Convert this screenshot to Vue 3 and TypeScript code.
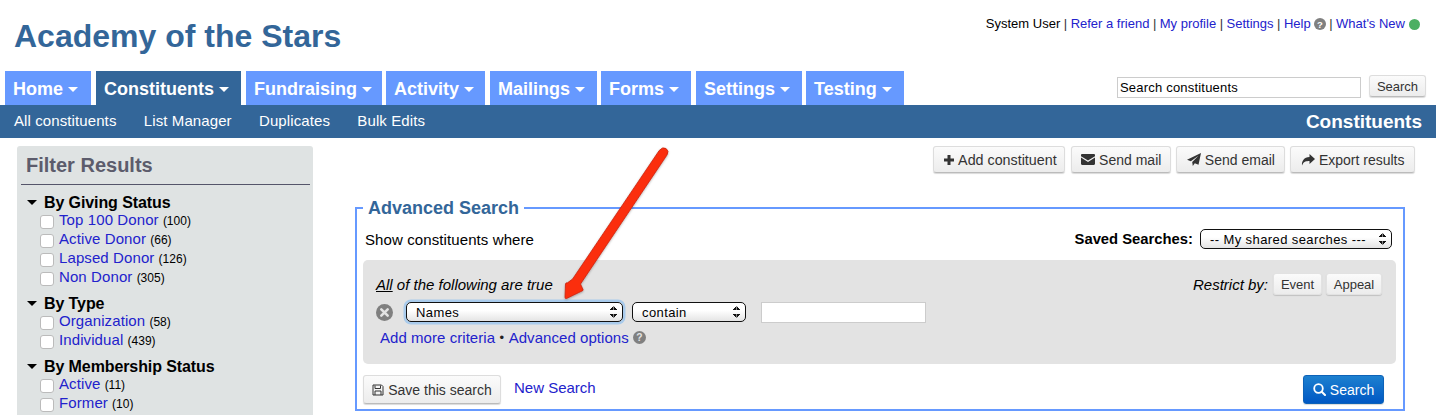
<script setup lang="ts">
const tabs = [
  { label: 'Home', w: 86, mr: 5 },
  { label: 'Constituents', w: 145, mr: 5, active: true },
  { label: 'Fundraising', w: 136, mr: 4 },
  { label: 'Activity', w: 99, mr: 5 },
  { label: 'Mailings', w: 107, mr: 4 },
  { label: 'Forms', w: 90, mr: 5 },
  { label: 'Settings', w: 106, mr: 4 },
  { label: 'Testing', w: 98, mr: 0 },
]
const subs = ['All constituents', 'List Manager', 'Duplicates', 'Bulk Edits']
const groups = [
  { title: 'By Giving Status', items: [['Top 100 Donor', '100'], ['Active Donor', '66'], ['Lapsed Donor', '126'], ['Non Donor', '305']] },
  { title: 'By Type', items: [['Organization', '58'], ['Individual', '439']] },
  { title: 'By Membership Status', items: [['Active', '11'], ['Former', '10']] },
]
</script>

<template>
  <div class="page">
    <header class="top">
      <h1 class="brand">Academy of the Stars</h1>
      <div class="userbar">
        <span>System User</span><i>|</i><a>Refer a friend</a><i>|</i><a>My profile</a><i>|</i><a>Settings</a><i>|</i><a>Help</a>
        <svg class="q" viewBox="0 0 12 12"><circle cx="6" cy="6" r="6" fill="#808080"/><text x="6" y="9.500" text-anchor="middle" font-size="9.500" font-weight="700" fill="#fff" font-family="Liberation Sans">?</text></svg>
        <i>|</i><a>What's New</a>
        <span class="dot"></span>
      </div>
    </header>

    <div class="navrow">
      <nav class="tabs">
        <a v-for="t in tabs" :key="t.label" class="tab" :class="{ active: t.active }" :style="{ width: t.w + 'px', marginRight: t.mr + 'px' }">
          {{ t.label }}<span class="caret"></span>
        </a>
      </nav>
      <form class="topsearch" @submit.prevent>
        <input class="topinput" value="Search constituents" />
        <button class="btn small">Search</button>
      </form>
    </div>

    <div class="subnav">
      <a v-for="s in subs" :key="s">{{ s }}</a>
      <strong>Constituents</strong>
    </div>

    <div class="content">
      <aside class="filters">
        <h2>Filter Results</h2>
        <div v-for="g in groups" :key="g.title" class="group">
          <h3><span class="gcaret"></span>{{ g.title }}</h3>
          <label v-for="it in g.items" :key="it[0]" class="item">
            <span class="check"></span><a>{{ it[0] }}</a> <small>({{ it[1] }})</small>
          </label>
        </div>
      </aside>

      <main class="main">
        <div class="actions">
          <button class="btn add">
            <svg viewBox="0 0 12 12" class="ic" style="width:12px"><path d="M4.500 1h3v3.500H11v3H7.500V11h-3V7.500H1v-3h3.500z" fill="#333"/></svg>Add constituent
          </button>
          <button class="btn mail">
            <svg viewBox="0 0 14 11" class="ic" style="width:14px"><path d="M0 2.200V1.200C0 .5.5 0 1.200 0h11.600c.7 0 1.200.5 1.200 1.200v1L7 6.500zM0 3.600l7 4.300 7-4.300v6.200c0 .7-.5 1.200-1.200 1.200H1.200C.5 11 0 10.500 0 9.800z" fill="#333"/></svg>Send mail
          </button>
          <button class="btn">
            <svg viewBox="0 0 14 13" class="ic" style="width:14px"><path d="M14 0 11.500 11.800 7.800 10.200 5.800 13 5.200 9 11.500 2.800 3.800 8.300 0 6.800z" fill="#333"/></svg>Send email
          </button>
          <button class="btn">
            <svg viewBox="0 0 14 12" class="ic" style="width:14px"><path d="M8.500 0 14 5 8.500 10V7C5 7 2.500 7.500 1 11.500.6 7 3 3.200 8.500 3z" fill="#333"/></svg>Export results
          </button>
        </div>

        <fieldset class="adv">
          <legend>Advanced Search</legend>
          <div class="advhead">
            <span class="show">Show constituents where</span>
            <div class="saved">
              <b>Saved Searches:</b>
              <div class="sel sel-saved">-- My shared searches ---<span class="updown"></span></div>
            </div>
          </div>

          <div class="criteria">
            <div class="crit-top">
              <em><u>All</u> of the following are true</em>
              <div class="restrict">
                <em>Restrict by:</em>
                <button class="btn tiny ev">Event</button>
                <button class="btn tiny ap">Appeal</button>
              </div>
            </div>
            <div class="crit-row">
              <svg class="x" viewBox="0 0 16 16"><circle cx="8" cy="8" r="8" fill="#808080"/><path d="M5 5l6 6M11 5l-6 6" stroke="#e3e3e3" stroke-width="2.400" stroke-linecap="round"/></svg>
              <div class="sel sel-names">Names<span class="updown"></span></div>
              <div class="sel sel-contain">contain<span class="updown"></span></div>
              <input class="value" />
            </div>
            <div class="crit-links">
              <a>Add more criteria</a><span class="bull">•</span><a>Advanced options</a>
              <svg class="q q2" viewBox="0 0 12 12"><circle cx="6" cy="6" r="6" fill="#808080"/><text x="6" y="9.500" text-anchor="middle" font-size="9.500" font-weight="700" fill="#e3e3e3" font-family="Liberation Sans">?</text></svg>
            </div>
          </div>

          <div class="advfoot">
            <button class="btn save">
              <svg viewBox="0 0 12 12" class="ic" style="width:12px"><path d="M1 1h8.500L11 2.500V11H1z M3 1.500v3h5.500v-3 M3 11V7h6v4" fill="none" stroke="#333" stroke-width="1"/></svg>Save this search
            </button>
            <a class="newsearch">New Search</a>
            <button class="btn primary">
              <svg viewBox="0 0 13 13" class="ic" style="width:13px"><circle cx="5.500" cy="5.500" r="4.300" fill="none" stroke="#fff" stroke-width="1.800"/><path d="M8.700 8.700 12 12" stroke="#fff" stroke-width="2" stroke-linecap="round"/></svg>Search
            </button>
          </div>
        </fieldset>
      </main>
    </div>

    <svg class="arrow" width="120" height="170" viewBox="0 0 120 170">
      <defs>
        <filter id="sh" x="-30%" y="-30%" width="160%" height="160%">
          <feDropShadow dx="0" dy="1" stdDeviation="1" flood-color="#000" flood-opacity=".3"/>
        </filter>
      </defs>
      <path d="M106.200 6.500 Q109.500 2.500 113 4.500 Q116.500 7 114 11 L27.500 140 L29.800 145 Q30.800 146.500 29 147 L13.500 154.500 Q12 155 12 153.300 L12.500 140 Q12.800 138.500 14.500 138.800 L19.600 135 Z" fill="#fb2d0d" stroke="#c9260f" stroke-width=".8" filter="url(#sh)"/>
    </svg>
  </div>
</template>

<style>
html, body { margin: 0; background: #fff; }
</style>

<style scoped>
.page {
  position: relative;
  width: 1436px;
  height: 415px;
  overflow: hidden;
  font-family: "Liberation Sans", Arial, sans-serif;
  font-size: 15px;
  color: #000;
  background: #fff;
}
a { color: #2222cc; }
.top {
  height: 71px;
  display: flex;
  justify-content: space-between;
  align-items: flex-start;
}
.brand {
  margin: 18px 0 0 14px;
  font-size: 32px;
  line-height: 37px;
  font-weight: 700;
  color: #336699;
}
.userbar {
  margin: 16px 16px 0 0;
  display: flex;
  align-items: center;
  font-size: 13px;
  line-height: 16px;
}
.userbar i { font-style: normal; margin: 0 3.500px; color: #333; }
.q { width: 12px; height: 12px; margin-left: 3px; }
.dot { width: 11px; height: 11px; border-radius: 50%; background: #4caf62; margin-left: 4px; }
.navrow {
  height: 34px;
  display: flex;
  justify-content: space-between;
  padding-left: 5px;
}
.tabs { display: flex; }
.tab {
  box-sizing: border-box;
  height: 34px;
  padding-left: 8px;
  background: #6699ff;
  color: #fff;
  font-size: 18px;
  font-weight: 700;
  line-height: 36px;
  white-space: nowrap;
}
.tab.active { background: #336699; }
.caret {
  display: inline-block;
  margin-left: 5px;
  vertical-align: 3px;
  border-left: 5px solid transparent;
  border-right: 5px solid transparent;
  border-top: 5px solid #fff;
}
.topsearch {
  margin: 4px 10px 0 0;
  display: flex;
  align-items: flex-start;
  gap: 8px;
}
.topinput {
  box-sizing: border-box;
  width: 244px;
  height: 21px;
  margin-top: 2px;
  border: 1px solid #ccc;
  padding: 0 2px;
  font: 13px "Liberation Sans", Arial, sans-serif;
  letter-spacing: .2px;
  color: #000;
  outline: none;
}
.btn {
  box-sizing: border-box;
  display: inline-flex;
  align-items: center;
  justify-content: center;
  border: 1px solid #ddd;
  border-bottom-color: #bbb;
  border-radius: 3px;
  background: linear-gradient(#fbfbfb, #ececec);
  box-shadow: 0 1px 1px rgba(0,0,0,.15);
  color: #333;
  font: 14px "Liberation Sans", Arial, sans-serif;
  padding: 0;
  white-space: nowrap;
}
.btn.small { width: 57px; height: 22px; font-size: 13px; }
.subnav {
  height: 33px;
  background: #336699;
  display: flex;
  align-items: center;
  padding: 0 14px;
  color: #fff;
  font-size: 15px;
}
.subnav a { color: #fff; margin-right: 27.300px; margin-top: -2px; letter-spacing: .1px; }
.subnav strong { margin-left: auto; font-size: 19px; margin-top: 1px; }
.content { display: flex; align-items: flex-start; padding: 8px 0 0 17px; }
.filters {
  box-sizing: border-box;
  width: 296px;
  height: 269px;
  flex: none;
  padding: 0 3px 0 4px;
  background: #dfe3e3;
  border-radius: 3px 3px 0 0;
}
.filters h2 {
  margin: 0 0 9px;
  height: 39px;
  box-sizing: border-box;
  border-bottom: 1px solid #55556a;
  padding: 7px 0 0 5px;
  font-size: 20px;
  line-height: 24px;
  color: #5c5c6c;
}
.group { margin-bottom: 8px; padding-left: 5px; }
.group h3 {
  margin: 0;
  font-size: 16px;
  letter-spacing: -.1px;
  line-height: 18px;
  height: 17px;
  display: flex;
  align-items: center;
}
.gcaret {
  width: 0;
  margin: 0 7px 0 1px;
  border-left: 5px solid transparent;
  border-right: 5px solid transparent;
  border-top: 5px solid #000;
}
.item {
  display: block;
  height: 19px;
  line-height: 18px;
  padding-left: 14px;
  font-size: 15px;
  white-space: nowrap;
}
.item a { letter-spacing: .1px; }
.item small { font-size: 12px; }
.check {
  display: inline-block;
  box-sizing: border-box;
  width: 14px;
  height: 14px;
  margin-right: 5px;
  vertical-align: -4px;
  border: 1px solid #bbb;
  border-radius: 3px;
  background: #fff;
}
.main { flex: 1; padding: 0 31px 0 42px; min-width: 0; }
.actions {
  display: flex;
  justify-content: flex-end;
  gap: 5px;
  height: 27px;
  margin: 0 -10px 25px 0;
}
.actions .btn { height: 27px; padding: 0 9.500px; }
.actions .mail { padding: 0 9px; }
.actions .add {
  width: 132px;
  margin-right: 1px;
  padding: 0 0 0 9px;
  justify-content: flex-start;
  font-size: 14.300px;
}
.add .ic { margin-right: 3px; }
.ic { height: auto; margin-right: 4px; flex: none; }
.adv {
  margin: 0;
  box-sizing: border-box;
  height: 213px;
  padding: 0 7px 0 6px;
  border: 2px solid #6699ff;
  min-width: 0;
}
.adv legend {
  margin-left: 0;
  padding: 0 5px;
  font-size: 18px;
  line-height: 20px;
  font-weight: 700;
  color: #336699;
}
.advhead {
  display: flex;
  justify-content: space-between;
  align-items: center;
  height: 22px;
  margin: 10px 4px 0 2px;
}
.show { letter-spacing: .1px; }
.saved { display: flex; align-items: center; gap: 7px; }
.saved b { font-size: 14.800px; }
.sel {
  box-sizing: border-box;
  position: relative;
  display: flex;
  align-items: center;
  height: 20px;
  border: 1px solid #111;
  border-radius: 5px;
  background: linear-gradient(#fff 40%, #e4e4e4);
  font-size: 13px;
  letter-spacing: .4px;
  padding-left: 9px;
}
.sel-saved { width: 192px; }
.sel-names { width: 217px; box-shadow: 0 0 0 2.500px #a9cbec; }
.sel-contain { width: 114px; margin-left: 9px; }
.updown {
  position: absolute;
  right: 5px;
  top: 3px;
  width: 7px;
  height: 12px;
  background:
    linear-gradient(to top left, #111 50%, transparent 51%) 0 0 / 3.500px 4px no-repeat,
    linear-gradient(to top right, #111 50%, transparent 51%) 100% 0 / 3.500px 4px no-repeat,
    linear-gradient(to bottom left, #111 50%, transparent 51%) 0 100% / 3.500px 4px no-repeat,
    linear-gradient(to bottom right, #111 50%, transparent 51%) 100% 100% / 3.500px 4px no-repeat;
}
.criteria {
  box-sizing: border-box;
  height: 104px;
  margin-top: 10px;
  padding: 13px 14px 0 13px;
  background: #e3e3e3;
  border-radius: 5px;
}
.crit-top {
  display: flex;
  justify-content: space-between;
  align-items: flex-start;
  height: 23px;
}
.crit-top > em { margin-top: 3px; }
.restrict { display: flex; align-items: center; gap: 4px; margin-top: 0; }
.restrict em { margin-right: 1px; }
.btn.tiny { height: 22px; font-size: 13px; border-color: #e2e2e2; }
.ev { width: 49px; }
.ap { width: 56px; }
.crit-row { display: flex; align-items: center; height: 24px; margin-top: 4px; }
.x { width: 17px; height: 17px; margin-right: 13px; }
.value {
  box-sizing: border-box;
  width: 165px;
  height: 21px;
  margin-left: 15px;
  border: 1px solid #ccc;
  background: #fff;
  outline: none;
}
.crit-links { display: flex; align-items: center; margin: 5px 0 0 4px; font-size: 15px; white-space: pre; letter-spacing: .05px; }
.bull { font-size: 13px; color: #222; margin: 0 4.500px; }
.q2 { width: 13px; height: 13px; margin-left: 4px; }
.advfoot { display: flex; align-items: flex-start; margin: 11px 12px 0 0; }
.save { width: 138px; height: 29px; }
.newsearch { margin: 4px 0 0 13px; font-size: 15px; }
.primary {
  margin-left: auto;
  width: 81px;
  height: 29px;
  border: 1px solid #0d62b8;
  background: linear-gradient(#1d80cf, #0058c4);
  color: #fff;
}
.arrow { position: absolute; left: 553px; top: 144px; pointer-events: none; }
</style>
